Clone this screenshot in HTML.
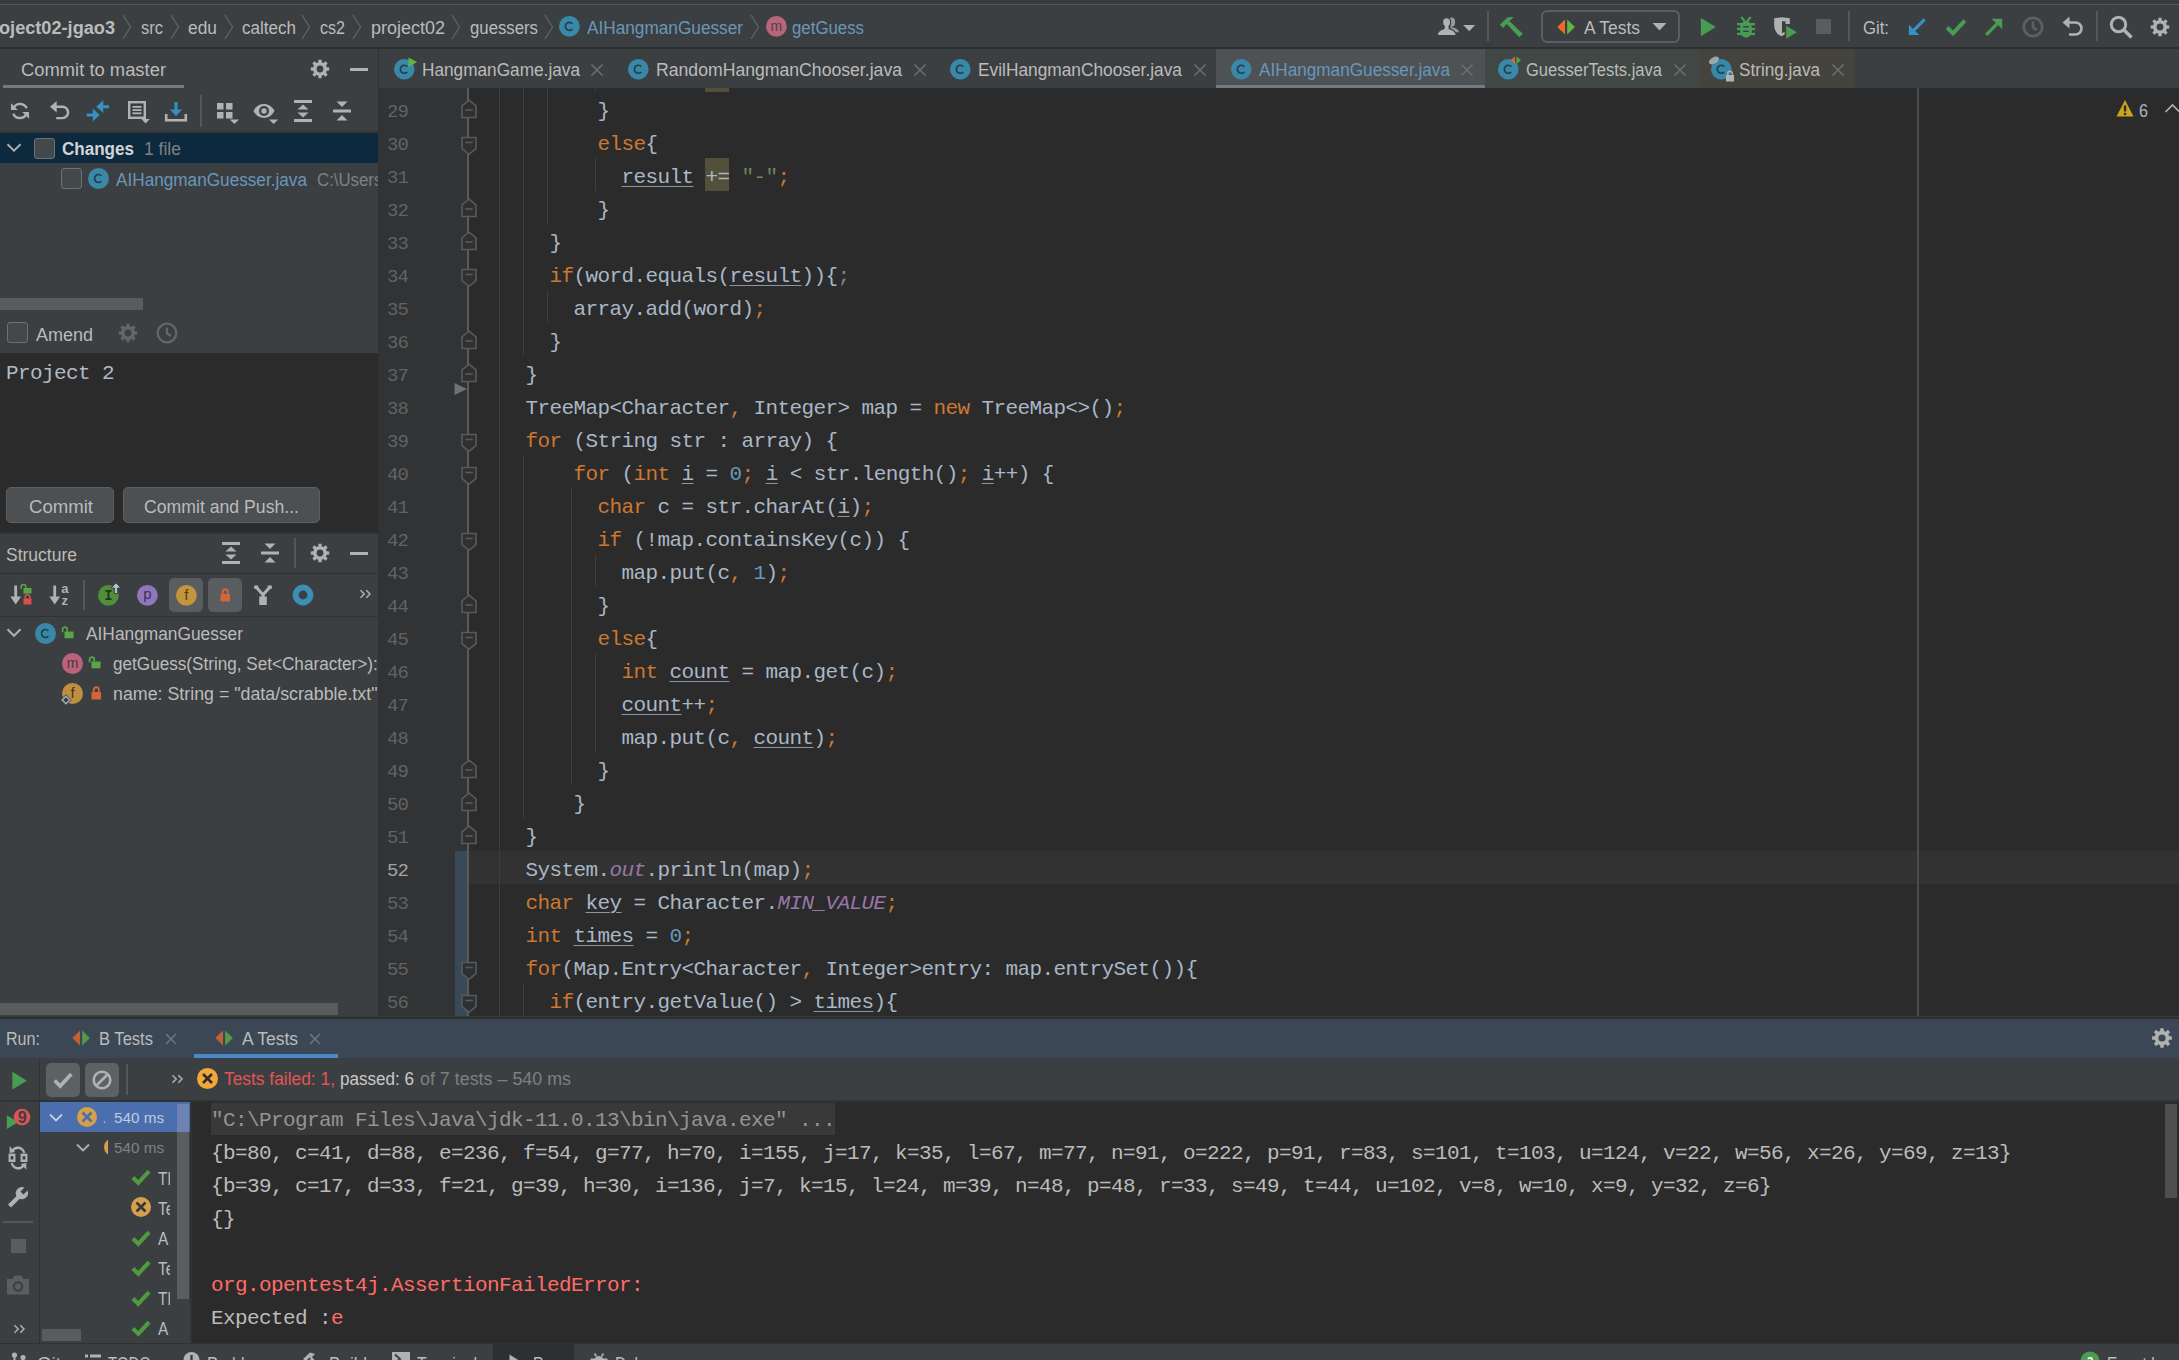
<!DOCTYPE html>
<html><head><meta charset="utf-8"><title>IDE</title><style>
html,body{margin:0;padding:0;background:#3c3f41;overflow:hidden;}
html{width:2179px;height:1360px;}
body{width:2179px;height:1360px;position:relative;overflow:hidden;font-family:"Liberation Sans",sans-serif;}
div,span.u,svg,pre{position:absolute;margin:0;padding:0;}
span.u{white-space:pre;transform-origin:0 50%;display:block;}
pre{font-family:"Liberation Mono",monospace;font-size:21px;letter-spacing:-0.602px;line-height:33px;color:#a9b7c6;white-space:pre;}
pre i{font-style:italic;color:#9876aa;}
pre b{font-weight:normal;color:#cc7832;}
pre s{text-decoration:none;color:#6a8759;}
pre em{font-style:normal;color:#6897bb;}
pre u{text-decoration:underline;text-decoration-thickness:1px;text-underline-offset:3px;text-decoration-color:#8a96a3;}
</style></head><body>
<div id="r" style="left:0;top:0;width:2179px;height:1360px;overflow:hidden">
<div style="left:0px;top:0px;width:2179px;height:48px;background:#3c3f41;"></div>
<div style="left:0px;top:0px;width:2179px;height:4px;background:#393b3d;"></div>
<div style="left:0px;top:4px;width:2179px;height:1px;background:#555555;"></div>
<div style="left:0px;top:47px;width:2179px;height:2px;background:#2d2f30;"></div>
<span class="u" style="left:-1px;top:15.94px;font-size:17.5px;line-height:24px;color:#bbbbbb;font-weight:bold;transform:scaleX(1.0371);">oject02-jgao3</span>
<svg style="left:122px;top:14px;" width="10" height="26" viewBox="0 0 10 26"><path d="M1 1 L8.5 13 L1 25" fill="none" stroke="#606365" stroke-width="1.3"/></svg>
<svg style="left:170px;top:14px;" width="10" height="26" viewBox="0 0 10 26"><path d="M1 1 L8.5 13 L1 25" fill="none" stroke="#606365" stroke-width="1.3"/></svg>
<svg style="left:224px;top:14px;" width="10" height="26" viewBox="0 0 10 26"><path d="M1 1 L8.5 13 L1 25" fill="none" stroke="#606365" stroke-width="1.3"/></svg>
<svg style="left:301px;top:14px;" width="10" height="26" viewBox="0 0 10 26"><path d="M1 1 L8.5 13 L1 25" fill="none" stroke="#606365" stroke-width="1.3"/></svg>
<svg style="left:352px;top:14px;" width="10" height="26" viewBox="0 0 10 26"><path d="M1 1 L8.5 13 L1 25" fill="none" stroke="#606365" stroke-width="1.3"/></svg>
<svg style="left:451px;top:14px;" width="10" height="26" viewBox="0 0 10 26"><path d="M1 1 L8.5 13 L1 25" fill="none" stroke="#606365" stroke-width="1.3"/></svg>
<svg style="left:544px;top:14px;" width="10" height="26" viewBox="0 0 10 26"><path d="M1 1 L8.5 13 L1 25" fill="none" stroke="#606365" stroke-width="1.3"/></svg>
<svg style="left:750px;top:14px;" width="10" height="26" viewBox="0 0 10 26"><path d="M1 1 L8.5 13 L1 25" fill="none" stroke="#606365" stroke-width="1.3"/></svg>
<span class="u" style="left:141px;top:15.94px;font-size:17.5px;line-height:24px;color:#bbbbbb;transform:scaleX(0.9431);">src</span>
<span class="u" style="left:188px;top:15.94px;font-size:17.5px;line-height:24px;color:#bbbbbb;transform:scaleX(0.9932);">edu</span>
<span class="u" style="left:242px;top:15.94px;font-size:17.5px;line-height:24px;color:#bbbbbb;transform:scaleX(0.9739);">caltech</span>
<span class="u" style="left:320px;top:15.94px;font-size:17.5px;line-height:24px;color:#bbbbbb;transform:scaleX(0.9180);">cs2</span>
<span class="u" style="left:371px;top:15.94px;font-size:17.5px;line-height:24px;color:#bbbbbb;transform:scaleX(1.0279);">project02</span>
<span class="u" style="left:470px;top:15.94px;font-size:17.5px;line-height:24px;color:#bbbbbb;transform:scaleX(0.9576);">guessers</span>
<svg style="left:558.3000000000001px;top:15.4px;" width="22.8" height="22.8" viewBox="0 0 22.8 22.8"><circle cx="11.4" cy="11.4" r="10.4" fill="#3a88a8"/><path d="M14.4 8.7 A4.0 4.0 0 1 0 14.4 14.100000000000001" fill="none" stroke="#213d4b" stroke-width="1.65"/></svg>
<span class="u" style="left:587px;top:15.94px;font-size:17.5px;line-height:24px;color:#6897bb;transform:scaleX(0.9839);">AIHangmanGuesser</span>
<svg style="left:764.9px;top:15.399999999999999px;" width="22.8" height="22.8" viewBox="0 0 22.8 22.8"><circle cx="11.4" cy="11.4" r="10.4" fill="#b4667b"/><text x="11.4" y="15.52" text-anchor="middle" font-family="Liberation Sans" font-size="14" font-weight="normal" fill="#2b2b2b" fill-opacity="0.7">m</text></svg>
<span class="u" style="left:792px;top:15.94px;font-size:17.5px;line-height:24px;color:#6897bb;transform:scaleX(0.9612);">getGuess</span>
<svg style="left:1436px;top:15px;" width="40" height="24" viewBox="0 0 40 24"><g fill="#afb1b3"><ellipse cx="15.8" cy="7.2" rx="3.3" ry="4.6" opacity="0.8"/><path d="M14 12 C19 12.6 22.8 14.2 22.9 17.3 L17 17.3 Z" opacity="0.8"/></g><g fill="#afb1b3" stroke="#3c3f41" stroke-width="1.1"><path d="M1.2 20.6 C1.2 16 4.5 14.6 8 13.6 L8.3 11.5 C5.8 9.5 5.6 2.6 10.6 2.6 C15.6 2.6 15.4 9.5 12.9 11.5 L13.2 13.6 C16.8 14.6 20.2 16 20.2 20.6 Z"/></g><path d="M27.2 10 L39.2 10 L33.2 16.2 Z" fill="#afb1b3"/></svg>
<div style="left:1487px;top:11px;width:2px;height:30px;background:#555759;"></div>
<svg style="left:1498px;top:14px;" width="28" height="26" viewBox="0 0 28 26"><g fill="#499c54"><path d="M1.9 10.4 L9.8 3.2 L15.7 2.9 L10.7 7.8 L5 13.9 Z"/><path d="M8.3 9.6 L11.4 7.1 L24.8 19.8 L21.2 23.2 Z"/></g></svg>
<div style="left:1541px;top:10px;width:139px;height:33px;background:transparent;box-sizing:border-box;border:2px solid #5c5f61;border-radius:6px;"></div>
<svg style="left:1557px;top:18px;" width="19" height="18" viewBox="0 0 19 18"><g opacity="1"><path d="M8 1.6 L8 16.4 L0.3 9 Z" fill="#f0692a"/><path d="M10.2 1.6 L10.2 16.4 L17.9 9 Z" fill="#5fb643"/></g></svg>
<span class="u" style="left:1584px;top:15.94px;font-size:17.5px;line-height:24px;color:#bbbbbb;transform:scaleX(0.9982);">A Tests</span>
<svg style="left:1652px;top:22px;" width="16" height="10" viewBox="0 0 16 10"><path d="M0.5 1 L14.5 1 L7.5 8.5 Z" fill="#afb1b3"/></svg>
<svg style="left:1700px;top:17px;" width="18" height="20" viewBox="0 0 18 20"><path d="M0.9 1 L15.8 10 L0.9 19.2 Z" fill="#499c54"/></svg>
<svg style="left:1734px;top:14px;" width="24" height="26" viewBox="0 0 24 26"><g fill="#499c54"><ellipse cx="12" cy="15.2" rx="6.1" ry="8.5"/><rect x="3" y="9" width="18" height="2.3"/><rect x="3" y="13.8" width="18" height="2.3"/><rect x="3" y="18.8" width="18" height="2.3"/></g><path d="M7.3 3 L10.6 7 M16.7 3 L13.4 7" stroke="#499c54" stroke-width="2.1" fill="none"/><rect x="9.2" y="12.1" width="5.6" height="1.4" fill="#3c3f41"/><rect x="9.2" y="16.6" width="5.6" height="1.4" fill="#3c3f41"/></svg>
<svg style="left:1772px;top:14px;" width="28" height="26" viewBox="0 0 28 26"><path d="M2.2 4.3 L9.9 3.2 L17.8 4.3 L17.8 10 L13.5 10 L13.5 7.2 L10 7.2 L10 19.3 L12.6 17.8 L12.6 20.6 L9.6 22.3 C5 20.4 2.2 16.4 2.2 11 Z" fill="#afb1b3"/><path d="M14.2 11.8 L14.2 24.8 L24.9 18.3 Z" fill="#499c54"/></svg>
<div style="left:1816px;top:19px;width:15px;height:15px;background:#5a5c5e;"></div>
<div style="left:1848px;top:11px;width:2px;height:30px;background:#555759;"></div>
<span class="u" style="left:1863px;top:15.94px;font-size:17.5px;line-height:24px;color:#bbbbbb;transform:scaleX(0.9551);">Git:</span>
<svg style="left:1906px;top:15.5px;" width="22" height="22" viewBox="0 0 22 22"><g transform="translate(11 11) scale(0.9) translate(-11 -11)"><g fill="none" stroke="#3592c4" stroke-width="3.5"><path d="M19.5 2.5 L4.5 17.5"/></g><path d="M2 20 L2 8.5 L13.5 20 Z" fill="#3592c4"/></g></svg>
<svg style="left:1944px;top:14.5px;" width="24" height="24" viewBox="0 0 24 24"><path d="M3 12.5 L9 18.5 L21 5.5" transform="translate(12 12) scale(0.98) translate(-12 -12)" fill="none" stroke="#499c54" stroke-width="4"/></svg>
<svg style="left:1983px;top:16.3px;" width="22" height="22" viewBox="0 0 22 22"><g transform="translate(11 11) scale(0.92) translate(-11 -11)"><g fill="none" stroke="#499c54" stroke-width="3.5"><path d="M2.5 19.5 L17 5"/></g><path d="M20 2 L8.5 2 L20 13.5 Z" fill="#499c54"/></g></svg>
<svg style="left:2021.3px;top:15.2px;" width="24" height="24" viewBox="0 0 24 24"><g opacity="1" fill="none" stroke="#5c5e60" stroke-width="2.8"><circle cx="12" cy="12" r="9.2"/><path d="M12 6.5 V12.5 L16 15"/></g></svg>
<svg style="left:2061px;top:15px;" width="24" height="24" viewBox="0 0 24 24"><g transform="translate(12 12) scale(1.0) translate(-12 -12)"><path d="M7 7.5 H14.5 A6 6 0 0 1 14.5 19.5 H8" fill="none" stroke="#afb1b3" stroke-width="2.6"/><path d="M1.5 7.5 L8.5 1.5 L8.5 13.5 Z" fill="#afb1b3"/></g></svg>
<div style="left:2096px;top:11px;width:2px;height:30px;background:#555759;"></div>
<svg style="left:2108px;top:14px;" width="26" height="26" viewBox="0 0 26 26"><circle cx="10.5" cy="10.5" r="7.2" fill="none" stroke="#afb1b3" stroke-width="3"/><path d="M15.5 15.5 L23.5 23.5" stroke="#afb1b3" stroke-width="3.6"/></svg>
<svg style="left:2148px;top:15px;" width="24" height="24" viewBox="0 0 24 24"><path d="M10.31 5.18 L10.40 2.64 L13.60 2.64 L13.69 5.18 L15.63 5.98 L17.49 4.25 L19.75 6.51 L18.02 8.37 L18.82 10.31 L21.36 10.40 L21.36 13.60 L18.82 13.69 L18.02 15.63 L19.75 17.49 L17.49 19.75 L15.63 18.02 L13.69 18.82 L13.60 21.36 L10.40 21.36 L10.31 18.82 L8.37 18.02 L6.51 19.75 L4.25 17.49 L5.98 15.63 L5.18 13.69 L2.64 13.60 L2.64 10.40 L5.18 10.31 L5.98 8.37 L4.25 6.51 L6.51 4.25 L8.37 5.98Z M8.58 12.00 a3.42 3.42 0 1 0 6.84 0 a3.42 3.42 0 1 0 -6.84 0Z" fill="#afb1b3" fill-rule="evenodd" opacity="1"/></svg>
<div style="left:379px;top:49px;width:1800px;height:39px;background:#3c3f41;"></div>
<div style="left:378px;top:49px;width:1px;height:39px;background:#323232;"></div>
<svg style="left:392.7px;top:58.0px;" width="22.6" height="22.6" viewBox="0 0 22.6 22.6"><circle cx="11.3" cy="11.3" r="10.3" fill="#3a88a8"/><path d="M14.3 8.600000000000001 A4.0 4.0 0 1 0 14.3 14.0" fill="none" stroke="#213d4b" stroke-width="1.65"/></svg>
<svg style="left:408px;top:57px;" width="10" height="11" viewBox="0 0 10 11"><path d="M0.5 0.5 L9 5 L0.5 10 Z" fill="#62b543"/></svg>
<span class="u" style="left:422px;top:58.04px;font-size:17.5px;line-height:24px;color:#bbbbbb;transform:scaleX(0.9844);">HangmanGame.java</span>
<svg style="left:589px;top:62px;" width="16" height="16" viewBox="0 0 16 16"><path d="M2.5 2.5 L13.5 13.5 M13.5 2.5 L2.5 13.5" stroke="#6c6f71" stroke-width="1.5" fill="none"/></svg>
<svg style="left:626.7px;top:58.0px;" width="22.6" height="22.6" viewBox="0 0 22.6 22.6"><circle cx="11.3" cy="11.3" r="10.3" fill="#3a88a8"/><path d="M14.3 8.600000000000001 A4.0 4.0 0 1 0 14.3 14.0" fill="none" stroke="#213d4b" stroke-width="1.65"/></svg>
<span class="u" style="left:656px;top:58.04px;font-size:17.5px;line-height:24px;color:#bbbbbb;transform:scaleX(1.0075);">RandomHangmanChooser.java</span>
<svg style="left:912px;top:62px;" width="16" height="16" viewBox="0 0 16 16"><path d="M2.5 2.5 L13.5 13.5 M13.5 2.5 L2.5 13.5" stroke="#6c6f71" stroke-width="1.5" fill="none"/></svg>
<svg style="left:948.7px;top:58.0px;" width="22.6" height="22.6" viewBox="0 0 22.6 22.6"><circle cx="11.3" cy="11.3" r="10.3" fill="#3a88a8"/><path d="M14.3 8.600000000000001 A4.0 4.0 0 1 0 14.3 14.0" fill="none" stroke="#213d4b" stroke-width="1.65"/></svg>
<span class="u" style="left:978px;top:58.04px;font-size:17.5px;line-height:24px;color:#bbbbbb;transform:scaleX(0.9892);">EvilHangmanChooser.java</span>
<svg style="left:1192px;top:62px;" width="16" height="16" viewBox="0 0 16 16"><path d="M2.5 2.5 L13.5 13.5 M13.5 2.5 L2.5 13.5" stroke="#6c6f71" stroke-width="1.5" fill="none"/></svg>
<div style="left:1216px;top:49px;width:269px;height:39px;background:#4e5254;"></div>
<div style="left:1216px;top:84.5px;width:269px;height:3.5px;background:#747a80;"></div>
<svg style="left:1229.7px;top:58.0px;" width="22.6" height="22.6" viewBox="0 0 22.6 22.6"><circle cx="11.3" cy="11.3" r="10.3" fill="#3a88a8"/><path d="M14.3 8.600000000000001 A4.0 4.0 0 1 0 14.3 14.0" fill="none" stroke="#213d4b" stroke-width="1.65"/></svg>
<span class="u" style="left:1259px;top:58.04px;font-size:17.5px;line-height:24px;color:#6897bb;transform:scaleX(0.9817);">AIHangmanGuesser.java</span>
<svg style="left:1459px;top:62px;" width="16" height="16" viewBox="0 0 16 16"><path d="M2.5 2.5 L13.5 13.5 M13.5 2.5 L2.5 13.5" stroke="#6c6f71" stroke-width="1.5" fill="none"/></svg>
<div style="left:1485px;top:49px;width:213px;height:39px;background:#3f4844;"></div>
<svg style="left:1496.7px;top:58.0px;" width="22.6" height="22.6" viewBox="0 0 22.6 22.6"><circle cx="11.3" cy="11.3" r="10.3" fill="#3a88a8"/><path d="M14.3 8.600000000000001 A4.0 4.0 0 1 0 14.3 14.0" fill="none" stroke="#213d4b" stroke-width="1.65"/></svg>
<svg style="left:1510px;top:56px;" width="12" height="9" viewBox="0 0 12 9"><path d="M5 0.5 L5 8 L0.5 4.2 Z" fill="#e8632a"/><path d="M6.5 0.5 L6.5 8 L11 4.2 Z" fill="#57a64a"/></svg>
<span class="u" style="left:1526px;top:58.04px;font-size:17.5px;line-height:24px;color:#bbbbbb;transform:scaleX(0.9448);">GuesserTests.java</span>
<svg style="left:1672px;top:62px;" width="16" height="16" viewBox="0 0 16 16"><path d="M2.5 2.5 L13.5 13.5 M13.5 2.5 L2.5 13.5" stroke="#6c6f71" stroke-width="1.5" fill="none"/></svg>
<div style="left:1698px;top:49px;width:157px;height:39px;background:#45433d;"></div>
<svg style="left:1709.7px;top:58.0px;" width="22.6" height="22.6" viewBox="0 0 22.6 22.6"><circle cx="11.3" cy="11.3" r="10.3" fill="#3a88a8"/><path d="M14.3 8.600000000000001 A4.0 4.0 0 1 0 14.3 14.0" fill="none" stroke="#213d4b" stroke-width="1.65"/></svg>
<svg style="left:1708px;top:56px;" width="12" height="9" viewBox="0 0 12 9"><ellipse cx="6" cy="4.5" rx="5.5" ry="3.2" fill="#9aa7b0" transform="rotate(-30 6 4.5)"/></svg>
<svg style="left:1725px;top:70px;" width="10" height="12" viewBox="0 0 10 12"><rect x="1" y="5" width="8" height="6.5" fill="#aeb5ba"/><path d="M2.8 5 V3.5 A2.2 2.2 0 0 1 7.2 3.5 V5" fill="none" stroke="#aeb5ba" stroke-width="1.4"/></svg>
<span class="u" style="left:1739px;top:58.04px;font-size:17.5px;line-height:24px;color:#bbbbbb;transform:scaleX(0.9796);">String.java</span>
<svg style="left:1830px;top:62px;" width="16" height="16" viewBox="0 0 16 16"><path d="M2.5 2.5 L13.5 13.5 M13.5 2.5 L2.5 13.5" stroke="#6c6f71" stroke-width="1.5" fill="none"/></svg>
<div style="left:0px;top:49px;width:378px;height:968px;background:#3c3f41;"></div>
<span class="u" style="left:21px;top:57.64px;font-size:17.5px;line-height:24px;color:#bbbbbb;transform:scaleX(1.0501);">Commit to master</span>
<div style="left:3px;top:84.8px;width:181px;height:3.5px;background:#747a80;"></div>
<svg style="left:308px;top:57px;" width="24" height="24" viewBox="0 0 24 24"><path d="M10.32 5.25 L10.42 2.73 L13.58 2.73 L13.68 5.25 L15.59 6.04 L17.44 4.33 L19.67 6.56 L17.96 8.41 L18.75 10.32 L21.27 10.42 L21.27 13.58 L18.75 13.68 L17.96 15.59 L19.67 17.44 L17.44 19.67 L15.59 17.96 L13.68 18.75 L13.58 21.27 L10.42 21.27 L10.32 18.75 L8.41 17.96 L6.56 19.67 L4.33 17.44 L6.04 15.59 L5.25 13.68 L2.73 13.58 L2.73 10.42 L5.25 10.32 L6.04 8.41 L4.33 6.56 L6.56 4.33 L8.41 6.04Z M8.62 12.00 a3.384 3.384 0 1 0 6.768 0 a3.384 3.384 0 1 0 -6.768 0Z" fill="#afb1b3" fill-rule="evenodd" opacity="1"/></svg>
<div style="left:350.0px;top:67.5px;width:18px;height:3px;background:#afb1b3;"></div>
<svg style="left:8px;top:99px;" width="24" height="24" viewBox="0 0 24 24"><g transform="translate(12 12) scale(0.9) translate(-12 -12)"><g fill="none" stroke="#afb1b3" stroke-width="2.7"><path d="M19.5 9 A8 8 0 0 0 5 8.5"/><path d="M4.5 15 A8 8 0 0 0 19 15.5"/></g><path d="M2 3.5 L2 11 L9.5 11 Z" fill="#afb1b3"/><path d="M22 20.5 L22 13 L14.5 13 Z" fill="#afb1b3"/></g></svg>
<svg style="left:48px;top:99px;" width="24" height="24" viewBox="0 0 24 24"><g transform="translate(12 12) scale(0.95) translate(-12 -12)"><path d="M7 7.5 H14.5 A6 6 0 0 1 14.5 19.5 H8" fill="none" stroke="#afb1b3" stroke-width="2.6"/><path d="M1.5 7.5 L8.5 1.5 L8.5 13.5 Z" fill="#afb1b3"/></g></svg>
<svg style="left:86px;top:99px;" width="24" height="24" viewBox="0 0 24 24"><g fill="#3592c4"><path d="M10.3 7.7 L17.2 1.3 L17.2 6.2 L23 6.2 L23 9.2 L17.2 9.2 L17.2 14.1 Z"/><path d="M13.7 16 L6.8 9.6 L6.8 14.5 L0.7 14.5 L0.7 17.5 L6.8 17.5 L6.8 22.4 Z"/></g></svg>
<svg style="left:127px;top:100px;" width="24" height="24" viewBox="0 0 24 24"><rect x="2.2" y="2.2" width="15.6" height="15.6" fill="none" stroke="#afb1b3" stroke-width="2.4"/><g fill="#afb1b3"><rect x="5.5" y="6" width="9" height="1.8"/><rect x="5.5" y="9.2" width="9" height="1.8"/><rect x="5.5" y="12.4" width="9" height="1.8"/><path d="M14.5 19 L22.8 19 L18.6 23.5 Z"/></g></svg>
<svg style="left:164px;top:99px;" width="24" height="24" viewBox="0 0 24 24"><path d="M2.2 15 V21.3 H21.8 V15" fill="none" stroke="#afb1b3" stroke-width="2.6"/><path d="M10.5 3 H13.5 V10.5 H18 L12 17 L6 10.5 H10.5 Z" fill="#3592c4"/></svg>
<div style="left:200px;top:95px;width:2px;height:32px;background:#555759;"></div>
<svg style="left:216px;top:102px;" width="24" height="23" viewBox="0 0 24 23"><g fill="#afb1b3"><rect x="1" y="1" width="6.5" height="6.5"/><rect x="10" y="1" width="6.5" height="6.5"/><rect x="1" y="10" width="6.5" height="6.5"/><rect x="10" y="10" width="6.5" height="6.5"/><path d="M13.8 17.5 L23 17.5 L18.4 22 Z"/></g></svg>
<svg style="left:252px;top:101px;" width="28" height="24" viewBox="0 0 28 24"><path d="M1.5 10 C5.5 0.8 18 0.8 22.5 10 C18 19.2 5.5 19.2 1.5 10 Z" fill="#afb1b3"/><circle cx="12" cy="10" r="5" fill="#3c3f41"/><circle cx="12" cy="10" r="2.7" fill="#afb1b3"/><path d="M17 18.5 L26.2 18.5 L21.6 23 Z" fill="#afb1b3"/></svg>
<svg style="left:293px;top:99px;" width="20" height="24" viewBox="0 0 20 24"><g fill="#afb1b3"><rect x="1" y="1" width="18" height="3"/><rect x="1" y="20" width="18" height="3"/><path d="M4.5 10.5 L10 5.5 L15.5 10.5 Z"/><path d="M4.5 13.5 L10 18.5 L15.5 13.5 Z"/></g></svg>
<svg style="left:332px;top:99px;" width="20" height="24" viewBox="0 0 20 24"><g fill="#afb1b3"><rect x="1" y="10.5" width="18" height="3"/><path d="M4.5 2.5 L10 8 L15.5 2.5 Z"/><path d="M4.5 21.5 L10 16 L15.5 21.5 Z"/></g></svg>
<div style="left:0px;top:130.5px;width:378px;height:2.5px;background:#343638;"></div>
<div style="left:0px;top:133px;width:378px;height:30px;background:#0d293e;"></div>
<svg style="left:4.300000000000001px;top:136.5px;" width="20" height="20" viewBox="0 0 20 20"><path d="M3.5 7.25 L10 13.75 L16.5 7.25" fill="none" stroke="#afb1b3" stroke-width="1.8"/></svg>
<div style="left:34.4px;top:138px;width:21px;height:21px;background:#43494a;box-sizing:border-box;border:1.5px solid #6e7173;border-radius:3px;"></div>
<span class="u" style="left:62px;top:137.14px;font-size:17.5px;line-height:24px;color:#d2d4d6;font-weight:bold;transform:scaleX(0.9742);">Changes</span>
<span class="u" style="left:144px;top:136.94px;font-size:17.5px;line-height:24px;color:#7d8082;transform:scaleX(1.0009);">1 file</span>
<div style="left:61.4px;top:168px;width:21px;height:21px;background:#43494a;box-sizing:border-box;border:1.5px solid #6e7173;border-radius:3px;"></div>
<svg style="left:87.4px;top:166.5px;" width="23.0" height="23.0" viewBox="0 0 23.0 23.0"><circle cx="11.5" cy="11.5" r="10.5" fill="#3a88a8"/><path d="M14.5 8.8 A4.0 4.0 0 1 0 14.5 14.2" fill="none" stroke="#213d4b" stroke-width="1.65"/></svg>
<span class="u" style="left:116px;top:168.24px;font-size:17.5px;line-height:24px;color:#6897bb;transform:scaleX(0.9817);">AIHangmanGuesser.java</span>
<div style="left:0;top:0;width:378px;height:1360px;overflow:hidden"><span class="u" style="left:317px;top:168.24px;font-size:17.5px;line-height:24px;color:#7d8082;transform:scaleX(0.9599);">C:\Users\</span></div>
<div style="left:0px;top:298px;width:143px;height:12px;background:#595b5d;"></div>
<div style="left:6.7px;top:322px;width:21px;height:21px;background:#43494a;box-sizing:border-box;border:1.5px solid #6e7173;border-radius:3px;"></div>
<span class="u" style="left:36px;top:322.54px;font-size:17.5px;line-height:24px;color:#bbbbbb;transform:scaleX(1.0279);">Amend</span>
<svg style="left:116px;top:321px;" width="24" height="24" viewBox="0 0 24 24"><path d="M10.31 5.18 L10.40 2.64 L13.60 2.64 L13.69 5.18 L15.63 5.98 L17.49 4.25 L19.75 6.51 L18.02 8.37 L18.82 10.31 L21.36 10.40 L21.36 13.60 L18.82 13.69 L18.02 15.63 L19.75 17.49 L17.49 19.75 L15.63 18.02 L13.69 18.82 L13.60 21.36 L10.40 21.36 L10.31 18.82 L8.37 18.02 L6.51 19.75 L4.25 17.49 L5.98 15.63 L5.18 13.69 L2.64 13.60 L2.64 10.40 L5.18 10.31 L5.98 8.37 L4.25 6.51 L6.51 4.25 L8.37 5.98Z M8.58 12.00 a3.42 3.42 0 1 0 6.84 0 a3.42 3.42 0 1 0 -6.84 0Z" fill="#62656a" fill-rule="evenodd" opacity="1"/></svg>
<svg style="left:155px;top:321px;" width="24" height="24" viewBox="0 0 24 24"><g opacity="1" fill="none" stroke="#62656a" stroke-width="2.3"><circle cx="12" cy="12" r="9.3"/><path d="M12 6.5 V12.5 L16 15"/></g></svg>
<div style="left:0px;top:353px;width:378px;height:179px;background:#2b2b2b;"></div>
<pre style="left:6px;top:357.3px;color:#b0bac5;">Project 2</pre>
<div style="left:6px;top:487px;width:108px;height:36px;background:#4c5052;box-sizing:border-box;border:1.5px solid #5e6060;border-radius:5px;"></div>
<span class="u" style="left:29px;top:495.14px;font-size:17.5px;line-height:24px;color:#bbbbbb;transform:scaleX(1.0617);">Commit</span>
<div style="left:123px;top:487px;width:197px;height:36px;background:#4c5052;box-sizing:border-box;border:1.5px solid #5e6060;border-radius:5px;"></div>
<span class="u" style="left:144px;top:495.14px;font-size:17.5px;line-height:24px;color:#bbbbbb;transform:scaleX(1.0086);">Commit and Push...</span>
<div style="left:0px;top:532px;width:378px;height:2px;background:#323232;"></div>
<span class="u" style="left:6px;top:543.24px;font-size:17.5px;line-height:24px;color:#bbbbbb;transform:scaleX(1.0000);">Structure</span>
<svg style="left:221px;top:541px;" width="20" height="24" viewBox="0 0 20 24"><g fill="#afb1b3"><rect x="1" y="1" width="18" height="3"/><rect x="1" y="20" width="18" height="3"/><path d="M4.5 10.5 L10 5.5 L15.5 10.5 Z"/><path d="M4.5 13.5 L10 18.5 L15.5 13.5 Z"/></g></svg>
<svg style="left:260px;top:541px;" width="20" height="24" viewBox="0 0 20 24"><g fill="#afb1b3"><rect x="1" y="10.5" width="18" height="3"/><path d="M4.5 2.5 L10 8 L15.5 2.5 Z"/><path d="M4.5 21.5 L10 16 L15.5 21.5 Z"/></g></svg>
<div style="left:294px;top:538px;width:2px;height:30px;background:#555759;"></div>
<svg style="left:308px;top:541px;" width="24" height="24" viewBox="0 0 24 24"><path d="M10.32 5.25 L10.42 2.73 L13.58 2.73 L13.68 5.25 L15.59 6.04 L17.44 4.33 L19.67 6.56 L17.96 8.41 L18.75 10.32 L21.27 10.42 L21.27 13.58 L18.75 13.68 L17.96 15.59 L19.67 17.44 L17.44 19.67 L15.59 17.96 L13.68 18.75 L13.58 21.27 L10.42 21.27 L10.32 18.75 L8.41 17.96 L6.56 19.67 L4.33 17.44 L6.04 15.59 L5.25 13.68 L2.73 13.58 L2.73 10.42 L5.25 10.32 L6.04 8.41 L4.33 6.56 L6.56 4.33 L8.41 6.04Z M8.62 12.00 a3.384 3.384 0 1 0 6.768 0 a3.384 3.384 0 1 0 -6.768 0Z" fill="#afb1b3" fill-rule="evenodd" opacity="1"/></svg>
<div style="left:350.0px;top:551.5px;width:18px;height:3px;background:#afb1b3;"></div>
<div style="left:0px;top:573px;width:378px;height:1px;background:#323232;"></div>
<svg style="left:9.5px;top:583px;" width="26" height="24" viewBox="0 0 26 24"><path d="M5.7 2.5 V17" stroke="#afb1b3" stroke-width="2.8" fill="none"/><path d="M0.3 13.5 L11.1 13.5 L5.7 21.5 Z" fill="#afb1b3"/><rect x="13.5" y="5" width="8" height="5.5" fill="#57a64a"/><path d="M11.2 6 V3.8 A2.3 2.3 0 0 1 15.8 3.8 V5" fill="none" stroke="#57a64a" stroke-width="1.5"/><rect x="13.5" y="15.5" width="8" height="6" fill="#db4f4f"/><path d="M15.2 15.5 V13.8 A2.3 2.3 0 0 1 19.8 13.8 V15.5" fill="none" stroke="#db4f4f" stroke-width="1.5"/></svg>
<svg style="left:48.5px;top:583px;" width="26" height="24" viewBox="0 0 26 24"><path d="M5.7 2.5 V17" stroke="#afb1b3" stroke-width="2.8" fill="none"/><path d="M0.3 13.5 L11.1 13.5 L5.7 21.5 Z" fill="#afb1b3"/><text x="12.3" y="10" font-family="Liberation Sans" font-size="13" font-weight="bold" fill="#afb1b3">a</text><text x="12.6" y="21.5" font-family="Liberation Sans" font-size="13" font-weight="bold" fill="#afb1b3">z</text></svg>
<div style="left:83px;top:580px;width:2px;height:30px;background:#555759;"></div>
<svg style="left:96.6px;top:583.9px;" width="22.8" height="22.8" viewBox="0 0 22.8 22.8"><circle cx="11.4" cy="11.4" r="10.4" fill="#4f8f3c"/><text x="11.4" y="16.02" text-anchor="middle" font-family="Liberation Mono" font-size="14" font-weight="bold" fill="#1d3517" fill-opacity="0.95">I</text></svg>
<svg style="left:109.5px;top:582px;" width="12" height="13" viewBox="0 0 12 13"><path d="M6 0.8 L11 6 L7.7 6 L7.7 11.5 L4.3 11.5 L4.3 6 L1 6 Z" fill="#b5c2cc" stroke="#3c3f41" stroke-width="1"/></svg>
<svg style="left:135.6px;top:583.6px;" width="22.8" height="22.8" viewBox="0 0 22.8 22.8"><circle cx="11.4" cy="11.4" r="10.4" fill="#9077bc"/><text x="11.4" y="14.850000000000001" text-anchor="middle" font-family="Liberation Sans" font-size="15" font-weight="normal" fill="#2f2444" fill-opacity="0.9">p</text></svg>
<div style="left:169px;top:578px;width:34px;height:34px;background:#5a5d5f;border-radius:5px;"></div>
<svg style="left:174.6px;top:583.6px;" width="22.8" height="22.8" viewBox="0 0 22.8 22.8"><circle cx="11.4" cy="11.4" r="10.4" fill="#c4943f"/><text x="11.4" y="16.35" text-anchor="middle" font-family="Liberation Sans" font-size="15" font-weight="normal" fill="#3f2d12" fill-opacity="0.9">f</text></svg>
<div style="left:208px;top:578px;width:34px;height:34px;background:#5a5d5f;border-radius:5px;"></div>
<svg style="left:218px;top:586.5px;" width="14" height="16" viewBox="0 0 14 16"><rect x="2.5" y="7" width="9.5" height="7.5" fill="#d0673a"/><path d="M4.7 7.5 V4.8 A2.55 2.55 0 0 1 9.8 4.8 V7.5" fill="none" stroke="#d0673a" stroke-width="1.8"/></svg>
<svg style="left:252px;top:584px;" width="22" height="22" viewBox="0 0 22 22"><g fill="#afb1b3"><rect x="7.2" y="12.5" width="7.6" height="8.5"/><rect x="2.2" y="1.5" width="4" height="3.4"/><rect x="15.8" y="1.5" width="4" height="3.4"/></g><path d="M3.6 2.6 L11 10.8 L18.4 2.6 M11 10.8 V14" fill="none" stroke="#afb1b3" stroke-width="3"/></svg>
<svg style="left:291px;top:583px;" width="24" height="24" viewBox="0 0 24 24"><circle cx="12" cy="12" r="7.4" fill="none" stroke="#3b8fb5" stroke-width="6"/></svg>
<svg style="left:358px;top:588.3px;" width="16" height="12" viewBox="0 0 16 12"><path d="M2.5 2.3 L6.2 6 L2.5 9.7 M8.3 2.3 L12 6 L8.3 9.7" fill="none" stroke="#afb1b3" stroke-width="1.5"/></svg>
<div style="left:0px;top:616px;width:378px;height:1px;background:#323232;"></div>
<svg style="left:4px;top:622px;" width="20" height="20" viewBox="0 0 20 20"><path d="M3.5 7.25 L10 13.75 L16.5 7.25" fill="none" stroke="#afb1b3" stroke-width="2"/></svg>
<svg style="left:33.5px;top:621.5px;" width="23.0" height="23.0" viewBox="0 0 23.0 23.0"><circle cx="11.5" cy="11.5" r="10.5" fill="#3a88a8"/><path d="M14.5 8.8 A4.0 4.0 0 1 0 14.5 14.2" fill="none" stroke="#213d4b" stroke-width="1.65"/></svg>
<svg style="left:60.7px;top:625.3px;" width="14" height="14" viewBox="0 0 14 14"><rect x="3.5" y="6.5" width="9" height="6.8" fill="#57a64a"/><path d="M1.6 7.2 V4.4 A2.3 2.3 0 0 1 6.2 4.4 V6.5" fill="none" stroke="#57a64a" stroke-width="1.7"/></svg>
<span class="u" style="left:86px;top:621.94px;font-size:17.5px;line-height:24px;color:#bbbbbb;transform:scaleX(0.9902);">AIHangmanGuesser</span>
<svg style="left:60.5px;top:651.5px;" width="23.0" height="23.0" viewBox="0 0 23.0 23.0"><circle cx="11.5" cy="11.5" r="10.5" fill="#b9627a"/><text x="11.5" y="15.620000000000001" text-anchor="middle" font-family="Liberation Sans" font-size="14" font-weight="normal" fill="#2b2b2b" fill-opacity="0.8">m</text></svg>
<svg style="left:87.7px;top:655.3px;" width="14" height="14" viewBox="0 0 14 14"><rect x="3.5" y="6.5" width="9" height="6.8" fill="#57a64a"/><path d="M1.6 7.2 V4.4 A2.3 2.3 0 0 1 6.2 4.4 V6.5" fill="none" stroke="#57a64a" stroke-width="1.7"/></svg>
<div style="left:0;top:0;width:378px;height:1360px;overflow:hidden"><span class="u" style="left:113px;top:651.94px;font-size:17.5px;line-height:24px;color:#bbbbbb;transform:scaleX(0.9788);">getGuess(String, Set&lt;Character&gt;): c</span></div>
<svg style="left:60.5px;top:681.5px;" width="23.0" height="23.0" viewBox="0 0 23.0 23.0"><circle cx="11.5" cy="11.5" r="10.5" fill="#bd8f3f"/><text x="11.5" y="16.45" text-anchor="middle" font-family="Liberation Sans" font-size="15" font-weight="normal" fill="#3d2b10" fill-opacity="0.9">f</text></svg>
<svg style="left:59.5px;top:693.5px;" width="12" height="12" viewBox="0 0 12 12"><path d="M6 0.3 L11.7 6 L6 11.7 L0.3 6 Z" fill="#3c3f41"/><path d="M6 2.2 L9.8 6 L6 9.8 L2.2 6 Z" fill="#3c3f41" stroke="#9fb0bd" stroke-width="1.5"/></svg>
<svg style="left:88.5px;top:684.7px;" width="14" height="16" viewBox="0 0 14 16"><rect x="2.5" y="7" width="9.5" height="7.5" fill="#d0673a"/><path d="M4.7 7.5 V4.8 A2.55 2.55 0 0 1 9.8 4.8 V7.5" fill="none" stroke="#d0673a" stroke-width="1.8"/></svg>
<div style="left:0;top:0;width:378px;height:1360px;overflow:hidden"><span class="u" style="left:113px;top:681.94px;font-size:17.5px;line-height:24px;color:#bbbbbb;transform:scaleX(1.0173);">name: String = "data/scrabble.txt"</span></div>
<div style="left:0px;top:1003px;width:338px;height:12px;background:#595b5d;"></div>
<div style="left:378px;top:88px;width:1px;height:929px;background:#323232;"></div>
<div style="left:379px;top:88px;width:1800px;height:928px;background:#2b2b2b;"></div>
<div style="left:379px;top:88px;width:89px;height:928px;background:#313335;"></div>
<div style="left:469px;top:851px;width:1710px;height:33px;background:#323232;"></div>
<div style="left:454.5px;top:851px;width:12.5px;height:165px;background:#384a57;"></div>
<div style="left:1917px;top:88px;width:2px;height:928px;background:#4b4b4b;"></div>
<div style="left:498.5px;top:88px;width:1.5px;height:928px;background:#3d3d3d;"></div>
<div style="left:522.5px;top:88px;width:1.5px;height:268px;background:#3d3d3d;"></div>
<div style="left:522.5px;top:455px;width:1.5px;height:363px;background:#3d3d3d;"></div>
<div style="left:522.5px;top:983px;width:1.5px;height:33px;background:#3d3d3d;"></div>
<div style="left:546.5px;top:88px;width:1.5px;height:136px;background:#3d3d3d;"></div>
<div style="left:546.5px;top:290px;width:1.5px;height:33px;background:#3d3d3d;"></div>
<div style="left:570.5px;top:488px;width:1.5px;height:297px;background:#3d3d3d;"></div>
<div style="left:594.5px;top:88px;width:1.5px;height:4px;background:#3d3d3d;"></div>
<div style="left:594.5px;top:158px;width:1.5px;height:33px;background:#3d3d3d;"></div>
<div style="left:594.5px;top:554px;width:1.5px;height:33px;background:#3d3d3d;"></div>
<div style="left:594.5px;top:653px;width:1.5px;height:99px;background:#3d3d3d;"></div>
<div style="left:704.7px;top:88px;width:24px;height:4px;background:#52503a;"></div>
<div style="left:704.7px;top:158px;width:24px;height:33px;background:#52503a;"></div>
<div style="left:467px;top:88px;width:2px;height:928px;background:#585a5c;"></div>
<svg style="left:459px;top:98px;" width="20" height="22" viewBox="0 0 20 22"><path d="M10 2.2 L17 8 L17 19.5 L3 19.5 L3 8 Z" fill="#2e3032" stroke="#585a5c" stroke-width="1.6"/><path d="M6.3 12 H13.7" stroke="#585a5c" stroke-width="1.6"/></svg>
<svg style="left:459px;top:197px;" width="20" height="22" viewBox="0 0 20 22"><path d="M10 2.2 L17 8 L17 19.5 L3 19.5 L3 8 Z" fill="#2e3032" stroke="#585a5c" stroke-width="1.6"/><path d="M6.3 12 H13.7" stroke="#585a5c" stroke-width="1.6"/></svg>
<svg style="left:459px;top:230px;" width="20" height="22" viewBox="0 0 20 22"><path d="M10 2.2 L17 8 L17 19.5 L3 19.5 L3 8 Z" fill="#2e3032" stroke="#585a5c" stroke-width="1.6"/><path d="M6.3 12 H13.7" stroke="#585a5c" stroke-width="1.6"/></svg>
<svg style="left:459px;top:329px;" width="20" height="22" viewBox="0 0 20 22"><path d="M10 2.2 L17 8 L17 19.5 L3 19.5 L3 8 Z" fill="#2e3032" stroke="#585a5c" stroke-width="1.6"/><path d="M6.3 12 H13.7" stroke="#585a5c" stroke-width="1.6"/></svg>
<svg style="left:459px;top:362px;" width="20" height="22" viewBox="0 0 20 22"><path d="M10 2.2 L17 8 L17 19.5 L3 19.5 L3 8 Z" fill="#2e3032" stroke="#585a5c" stroke-width="1.6"/><path d="M6.3 12 H13.7" stroke="#585a5c" stroke-width="1.6"/></svg>
<svg style="left:459px;top:593px;" width="20" height="22" viewBox="0 0 20 22"><path d="M10 2.2 L17 8 L17 19.5 L3 19.5 L3 8 Z" fill="#2e3032" stroke="#585a5c" stroke-width="1.6"/><path d="M6.3 12 H13.7" stroke="#585a5c" stroke-width="1.6"/></svg>
<svg style="left:459px;top:758px;" width="20" height="22" viewBox="0 0 20 22"><path d="M10 2.2 L17 8 L17 19.5 L3 19.5 L3 8 Z" fill="#2e3032" stroke="#585a5c" stroke-width="1.6"/><path d="M6.3 12 H13.7" stroke="#585a5c" stroke-width="1.6"/></svg>
<svg style="left:459px;top:791px;" width="20" height="22" viewBox="0 0 20 22"><path d="M10 2.2 L17 8 L17 19.5 L3 19.5 L3 8 Z" fill="#2e3032" stroke="#585a5c" stroke-width="1.6"/><path d="M6.3 12 H13.7" stroke="#585a5c" stroke-width="1.6"/></svg>
<svg style="left:459px;top:824px;" width="20" height="22" viewBox="0 0 20 22"><path d="M10 2.2 L17 8 L17 19.5 L3 19.5 L3 8 Z" fill="#2e3032" stroke="#585a5c" stroke-width="1.6"/><path d="M6.3 12 H13.7" stroke="#585a5c" stroke-width="1.6"/></svg>
<svg style="left:459px;top:135px;" width="20" height="22" viewBox="0 0 20 22"><path d="M3 2.5 L17 2.5 L17 13.5 L10 19.3 L3 13.5 Z" fill="#2e3032" stroke="#585a5c" stroke-width="1.6"/><path d="M6.3 7.5 H13.7" stroke="#585a5c" stroke-width="1.6"/></svg>
<svg style="left:459px;top:267px;" width="20" height="22" viewBox="0 0 20 22"><path d="M3 2.5 L17 2.5 L17 13.5 L10 19.3 L3 13.5 Z" fill="#2e3032" stroke="#585a5c" stroke-width="1.6"/><path d="M6.3 7.5 H13.7" stroke="#585a5c" stroke-width="1.6"/></svg>
<svg style="left:459px;top:432px;" width="20" height="22" viewBox="0 0 20 22"><path d="M3 2.5 L17 2.5 L17 13.5 L10 19.3 L3 13.5 Z" fill="#2e3032" stroke="#585a5c" stroke-width="1.6"/><path d="M6.3 7.5 H13.7" stroke="#585a5c" stroke-width="1.6"/></svg>
<svg style="left:459px;top:465px;" width="20" height="22" viewBox="0 0 20 22"><path d="M3 2.5 L17 2.5 L17 13.5 L10 19.3 L3 13.5 Z" fill="#2e3032" stroke="#585a5c" stroke-width="1.6"/><path d="M6.3 7.5 H13.7" stroke="#585a5c" stroke-width="1.6"/></svg>
<svg style="left:459px;top:531px;" width="20" height="22" viewBox="0 0 20 22"><path d="M3 2.5 L17 2.5 L17 13.5 L10 19.3 L3 13.5 Z" fill="#2e3032" stroke="#585a5c" stroke-width="1.6"/><path d="M6.3 7.5 H13.7" stroke="#585a5c" stroke-width="1.6"/></svg>
<svg style="left:459px;top:630px;" width="20" height="22" viewBox="0 0 20 22"><path d="M3 2.5 L17 2.5 L17 13.5 L10 19.3 L3 13.5 Z" fill="#2e3032" stroke="#585a5c" stroke-width="1.6"/><path d="M6.3 7.5 H13.7" stroke="#585a5c" stroke-width="1.6"/></svg>
<svg style="left:459px;top:960px;" width="20" height="22" viewBox="0 0 20 22"><path d="M3 2.5 L17 2.5 L17 13.5 L10 19.3 L3 13.5 Z" fill="#2e3032" stroke="#585a5c" stroke-width="1.6"/><path d="M6.3 7.5 H13.7" stroke="#585a5c" stroke-width="1.6"/></svg>
<svg style="left:459px;top:993px;" width="20" height="22" viewBox="0 0 20 22"><path d="M3 2.5 L17 2.5 L17 13.5 L10 19.3 L3 13.5 Z" fill="#2e3032" stroke="#585a5c" stroke-width="1.6"/><path d="M6.3 7.5 H13.7" stroke="#585a5c" stroke-width="1.6"/></svg>
<svg style="left:454px;top:382px;" width="14" height="14" viewBox="0 0 14 14"><path d="M0.5 1 L13 7 L0.5 13 Z" fill="#6c727a"/></svg>
<pre style="left:377.5px;width:30.4px;text-align:right;top:95.8px;font-size:19px;letter-spacing:-0.9px;color:#606366;">29</pre>
<pre style="left:377.5px;width:30.4px;text-align:right;top:128.8px;font-size:19px;letter-spacing:-0.9px;color:#606366;">30</pre>
<pre style="left:377.5px;width:30.4px;text-align:right;top:161.8px;font-size:19px;letter-spacing:-0.9px;color:#606366;">31</pre>
<pre style="left:377.5px;width:30.4px;text-align:right;top:194.8px;font-size:19px;letter-spacing:-0.9px;color:#606366;">32</pre>
<pre style="left:377.5px;width:30.4px;text-align:right;top:227.8px;font-size:19px;letter-spacing:-0.9px;color:#606366;">33</pre>
<pre style="left:377.5px;width:30.4px;text-align:right;top:260.8px;font-size:19px;letter-spacing:-0.9px;color:#606366;">34</pre>
<pre style="left:377.5px;width:30.4px;text-align:right;top:293.8px;font-size:19px;letter-spacing:-0.9px;color:#606366;">35</pre>
<pre style="left:377.5px;width:30.4px;text-align:right;top:326.8px;font-size:19px;letter-spacing:-0.9px;color:#606366;">36</pre>
<pre style="left:377.5px;width:30.4px;text-align:right;top:359.8px;font-size:19px;letter-spacing:-0.9px;color:#606366;">37</pre>
<pre style="left:377.5px;width:30.4px;text-align:right;top:392.8px;font-size:19px;letter-spacing:-0.9px;color:#606366;">38</pre>
<pre style="left:377.5px;width:30.4px;text-align:right;top:425.8px;font-size:19px;letter-spacing:-0.9px;color:#606366;">39</pre>
<pre style="left:377.5px;width:30.4px;text-align:right;top:458.8px;font-size:19px;letter-spacing:-0.9px;color:#606366;">40</pre>
<pre style="left:377.5px;width:30.4px;text-align:right;top:491.8px;font-size:19px;letter-spacing:-0.9px;color:#606366;">41</pre>
<pre style="left:377.5px;width:30.4px;text-align:right;top:524.8px;font-size:19px;letter-spacing:-0.9px;color:#606366;">42</pre>
<pre style="left:377.5px;width:30.4px;text-align:right;top:557.8px;font-size:19px;letter-spacing:-0.9px;color:#606366;">43</pre>
<pre style="left:377.5px;width:30.4px;text-align:right;top:590.8px;font-size:19px;letter-spacing:-0.9px;color:#606366;">44</pre>
<pre style="left:377.5px;width:30.4px;text-align:right;top:623.8px;font-size:19px;letter-spacing:-0.9px;color:#606366;">45</pre>
<pre style="left:377.5px;width:30.4px;text-align:right;top:656.8px;font-size:19px;letter-spacing:-0.9px;color:#606366;">46</pre>
<pre style="left:377.5px;width:30.4px;text-align:right;top:689.8px;font-size:19px;letter-spacing:-0.9px;color:#606366;">47</pre>
<pre style="left:377.5px;width:30.4px;text-align:right;top:722.8px;font-size:19px;letter-spacing:-0.9px;color:#606366;">48</pre>
<pre style="left:377.5px;width:30.4px;text-align:right;top:755.8px;font-size:19px;letter-spacing:-0.9px;color:#606366;">49</pre>
<pre style="left:377.5px;width:30.4px;text-align:right;top:788.8px;font-size:19px;letter-spacing:-0.9px;color:#606366;">50</pre>
<pre style="left:377.5px;width:30.4px;text-align:right;top:821.8px;font-size:19px;letter-spacing:-0.9px;color:#606366;">51</pre>
<pre style="left:377.5px;width:30.4px;text-align:right;top:854.8px;font-size:19px;letter-spacing:-0.9px;color:#a4a3a3;">52</pre>
<pre style="left:377.5px;width:30.4px;text-align:right;top:887.8px;font-size:19px;letter-spacing:-0.9px;color:#606366;">53</pre>
<pre style="left:377.5px;width:30.4px;text-align:right;top:920.8px;font-size:19px;letter-spacing:-0.9px;color:#606366;">54</pre>
<pre style="left:377.5px;width:30.4px;text-align:right;top:953.8px;font-size:19px;letter-spacing:-0.9px;color:#606366;">55</pre>
<pre style="left:377.5px;width:30.4px;text-align:right;top:986.8px;font-size:19px;letter-spacing:-0.9px;color:#606366;">56</pre>
<pre style="left:597.5px;top:95px;">}</pre>
<pre style="left:597.5px;top:128px;"><b>else</b>{</pre>
<pre style="left:621.5px;top:161px;"><u>result</u> += <s>"-"</s><b>;</b></pre>
<pre style="left:597.5px;top:194px;">}</pre>
<pre style="left:549.5px;top:227px;">}</pre>
<pre style="left:549.5px;top:260px;"><b>if</b>(word.equals(<u>result</u>)){<span style="color:#808080">;</span></pre>
<pre style="left:573.5px;top:293px;">array.add(word)<b>;</b></pre>
<pre style="left:549.5px;top:326px;">}</pre>
<pre style="left:525.5px;top:359px;">}</pre>
<pre style="left:525.5px;top:392px;">TreeMap&lt;Character<b>,</b> Integer&gt; map = <b>new</b> TreeMap&lt;&gt;()<b>;</b></pre>
<pre style="left:525.5px;top:425px;"><b>for</b> (String str : array) {</pre>
<pre style="left:573.5px;top:458px;"><b>for</b> (<b>int</b> <u>i</u> = <em>0</em><b>;</b> <u>i</u> &lt; str.length()<b>;</b> <u>i</u>++) {</pre>
<pre style="left:597.5px;top:491px;"><b>char</b> c = str.charAt(<u>i</u>)<b>;</b></pre>
<pre style="left:597.5px;top:524px;"><b>if</b> (!map.containsKey(c)) {</pre>
<pre style="left:621.5px;top:557px;">map.put(c<b>,</b> <em>1</em>)<b>;</b></pre>
<pre style="left:597.5px;top:590px;">}</pre>
<pre style="left:597.5px;top:623px;"><b>else</b>{</pre>
<pre style="left:621.5px;top:656px;"><b>int</b> <u>count</u> = map.get(c)<b>;</b></pre>
<pre style="left:621.5px;top:689px;"><u>count</u>++<b>;</b></pre>
<pre style="left:621.5px;top:722px;">map.put(c<b>,</b> <u>count</u>)<b>;</b></pre>
<pre style="left:597.5px;top:755px;">}</pre>
<pre style="left:573.5px;top:788px;">}</pre>
<pre style="left:525.5px;top:821px;">}</pre>
<pre style="left:525.5px;top:854px;">System.<i>out</i>.println(map)<b>;</b></pre>
<pre style="left:525.5px;top:887px;"><b>char</b> <u>key</u> = Character.<i>MIN_VALUE</i><b>;</b></pre>
<pre style="left:525.5px;top:920px;"><b>int</b> <u>times</u> = <em>0</em><b>;</b></pre>
<pre style="left:525.5px;top:953px;"><b>for</b>(Map.Entry&lt;Character<b>,</b> Integer&gt;entry: map.entrySet()){</pre>
<pre style="left:549.5px;top:986px;"><b>if</b>(entry.getValue() &gt; <u>times</u>){</pre>
<svg style="left:2116px;top:99px;" width="18" height="19" viewBox="0 0 18 19"><path d="M9 1 L17.5 17.5 L0.5 17.5 Z" fill="#cba31e"/><rect x="7.9" y="6.5" width="2.3" height="6" fill="#2b2b2b"/><rect x="7.9" y="13.8" width="2.3" height="2.3" fill="#2b2b2b"/></svg>
<span class="u" style="left:2139px;top:98.94px;font-size:17.5px;line-height:24px;color:#a9b7c6;transform:scaleX(0.9247);">6</span>
<svg style="left:2164px;top:102px;" width="16" height="12" viewBox="0 0 16 12"><path d="M1.5 10 L8.5 3 L15.5 10" fill="none" stroke="#afb1b3" stroke-width="1.6"/></svg>
<div style="left:0px;top:1016px;width:2179px;height:1px;background:#393c3e;"></div>
<div style="left:0px;top:1017px;width:2179px;height:2px;background:#2d2e2f;"></div>
<div style="left:0px;top:1019px;width:2179px;height:39px;background:#3b4754;"></div>
<span class="u" style="left:6px;top:1026.94px;font-size:17.5px;line-height:24px;color:#bbbbbb;transform:scaleX(0.9198);">Run:</span>
<svg style="left:71.7px;top:1029px;" width="19" height="18" viewBox="0 0 19 18"><g opacity="0.75"><path d="M8 1.6 L8 16.4 L0.3 9 Z" fill="#f0692a"/><path d="M10.2 1.6 L10.2 16.4 L17.9 9 Z" fill="#5fb643"/></g></svg>
<span class="u" style="left:99px;top:1026.94px;font-size:17.5px;line-height:24px;color:#bbbbbb;transform:scaleX(0.9463);">B Tests</span>
<svg style="left:163px;top:1031px;" width="16" height="16" viewBox="0 0 16 16"><path d="M3 3 L13 13 M13 3 L3 13" stroke="#6e7580" stroke-width="1.5" fill="none"/></svg>
<svg style="left:214.7px;top:1029px;" width="19" height="18" viewBox="0 0 19 18"><g opacity="0.75"><path d="M8 1.6 L8 16.4 L0.3 9 Z" fill="#f0692a"/><path d="M10.2 1.6 L10.2 16.4 L17.9 9 Z" fill="#5fb643"/></g></svg>
<span class="u" style="left:242px;top:1026.94px;font-size:17.5px;line-height:24px;color:#bbbbbb;transform:scaleX(0.9982);">A Tests</span>
<svg style="left:307px;top:1031px;" width="16" height="16" viewBox="0 0 16 16"><path d="M3 3 L13 13 M13 3 L3 13" stroke="#6e7580" stroke-width="1.5" fill="none"/></svg>
<div style="left:194px;top:1054px;width:144px;height:4px;background:#4a88c7;"></div>
<svg style="left:2150px;top:1026px;" width="24" height="24" viewBox="0 0 24 24"><path d="M10.22 4.82 L10.32 2.14 L13.68 2.14 L13.78 4.82 L15.82 5.66 L17.78 3.84 L20.16 6.22 L18.34 8.18 L19.18 10.22 L21.86 10.32 L21.86 13.68 L19.18 13.78 L18.34 15.82 L20.16 17.78 L17.78 20.16 L15.82 18.34 L13.78 19.18 L13.68 21.86 L10.32 21.86 L10.22 19.18 L8.18 18.34 L6.22 20.16 L3.84 17.78 L5.66 15.82 L4.82 13.78 L2.14 13.68 L2.14 10.32 L4.82 10.22 L5.66 8.18 L3.84 6.22 L6.22 3.84 L8.18 5.66Z M8.40 12.00 a3.5999999999999996 3.5999999999999996 0 1 0 7.199999999999999 0 a3.5999999999999996 3.5999999999999996 0 1 0 -7.199999999999999 0Z" fill="#afb1b3" fill-rule="evenodd" opacity="1"/></svg>
<div style="left:0px;top:1058px;width:2179px;height:43px;background:#3c3f41;"></div>
<div style="left:0px;top:1100px;width:2179px;height:2px;background:#323232;"></div>
<div style="left:39px;top:1058px;width:1px;height:285px;background:#323232;"></div>
<svg style="left:12px;top:1070.5px;" width="16" height="19" viewBox="0 0 16 19"><path d="M0.3 0.8 L14.8 9.7 L0.3 18.5 Z" fill="#499c54"/></svg>
<div style="left:46px;top:1063px;width:34px;height:34px;background:#5c6164;border-radius:5px;"></div>
<svg style="left:51px;top:1068px;" width="24" height="24" viewBox="0 0 24 24"><path d="M3 12.5 L9 18.5 L21 5.5" transform="translate(12 12) scale(0.93) translate(-12 -12)" fill="none" stroke="#afb1b3" stroke-width="4"/></svg>
<div style="left:85px;top:1063px;width:34px;height:34px;background:#5c6164;border-radius:5px;"></div>
<svg style="left:91px;top:1069px;" width="22" height="22" viewBox="0 0 22 22"><circle cx="11" cy="11" r="8.3" fill="none" stroke="#afb1b3" stroke-width="2.6"/><path d="M5.5 16.5 L16.5 5.5" stroke="#afb1b3" stroke-width="2.6"/></svg>
<div style="left:126px;top:1064px;width:2px;height:31px;background:#555759;"></div>
<svg style="left:170px;top:1073px;" width="16" height="12" viewBox="0 0 16 12"><path d="M2.5 2.3 L6.2 6 L2.5 9.7 M8.3 2.3 L12 6 L8.3 9.7" fill="none" stroke="#afb1b3" stroke-width="1.5"/></svg>
<svg style="left:195.5px;top:1066.5px;" width="23.0" height="23.0" viewBox="0 0 23.0 23.0"><g opacity="1"><circle cx="11.5" cy="11.5" r="10.5" fill="#f2a73b"/><path d="M7.0 7.0 L16.0 16.0 M16.0 7.0 L7.0 16.0" stroke="#2b2b2b" stroke-width="2.6" fill="none"/></g></svg>
<span class="u" style="left:224px;top:1067.44px;font-size:17.5px;line-height:24px;color:#e05555;transform:scaleX(0.9923);">Tests failed: 1,</span>
<span class="u" style="left:340px;top:1067.44px;font-size:17.5px;line-height:24px;color:#c9c9c9;transform:scaleX(0.9751);">passed: 6</span>
<span class="u" style="left:420px;top:1067.44px;font-size:17.5px;line-height:24px;color:#7d8082;transform:scaleX(1.0213);">of 7 tests – 540 ms</span>
<div style="left:0px;top:1102px;width:39px;height:241px;background:#3c3f41;"></div>
<svg style="left:4px;top:1104px;" width="30" height="28" viewBox="0 0 30 28"><path d="M2.8 11.3 L2.8 24.9 L14.2 18.1 Z" fill="#499c54"/><circle cx="18" cy="13.1" r="8.3" fill="#db5452"/><text x="18.2" y="18.8" text-anchor="middle" font-family="Liberation Sans" font-weight="bold" font-size="16" fill="#3c3f41">9</text></svg>
<svg style="left:6px;top:1144px;" width="26" height="28" viewBox="0 0 26 28"><g transform="translate(12 14) scale(0.8 0.98) translate(-13 -14)"><g fill="none" stroke="#afb1b3" stroke-width="2.6"><path d="M21 9 A9 9 0 0 0 6 6.5"/><path d="M5 19 A9 9 0 0 0 20 21.5"/><rect x="2.5" y="10.8" width="6" height="6"/><rect x="17.5" y="10.8" width="6" height="6"/></g><path d="M2.5 2 L2.5 9 L9.5 8 Z" fill="#afb1b3"/><path d="M23.5 26 L23.5 19 L16.5 20 Z" fill="#afb1b3"/></g></svg>
<svg style="left:6px;top:1185px;" width="24" height="24" viewBox="0 0 24 24"><path d="M3.5 21 L13 11.5" stroke="#afb1b3" stroke-width="4.2" fill="none"/><path d="M21.5 5.5 L17.5 9.5 L14.5 6.5 L18.5 2.5 A6.2 6.2 0 1 0 21.5 5.5 Z" fill="#afb1b3"/></svg>
<div style="left:3px;top:1221px;width:30px;height:2px;background:#55585a;"></div>
<div style="left:10.5px;top:1238.6px;width:15px;height:14.6px;background:#5b5d5f;"></div>
<svg style="left:6px;top:1274px;" width="24" height="22" viewBox="0 0 24 22"><path d="M1 5 H6.5 L8.5 1.5 H15.5 L17.5 5 H23 V20.5 H1 Z" fill="#5b5d5f"/><circle cx="12" cy="12.5" r="4.2" fill="none" stroke="#3c3f41" stroke-width="2.2"/></svg>
<svg style="left:11.5px;top:1322.5px;" width="16" height="12" viewBox="0 0 16 12"><path d="M2.5 2.3 L6.2 6 L2.5 9.7 M8.3 2.3 L12 6 L8.3 9.7" fill="none" stroke="#afb1b3" stroke-width="1.5"/></svg>
<div style="left:40px;top:1102px;width:150px;height:241px;background:#3c3f41;"></div>
<div style="left:40px;top:1102px;width:150px;height:30px;background:#4b6eaf;"></div>
<svg style="left:46px;top:1107px;" width="20" height="20" viewBox="0 0 20 20"><path d="M4 7.5 L10 13.5 L16 7.5" fill="none" stroke="#c4cde0" stroke-width="1.8"/></svg>
<svg style="left:76px;top:1106px;" width="22" height="22" viewBox="0 0 22 22"><g opacity="1"><circle cx="11" cy="11" r="10" fill="#d6a048"/><path d="M6.5 6.5 L15.5 15.5 M15.5 6.5 L6.5 15.5" stroke="#4b6eaf" stroke-width="2.6" fill="none"/></g></svg>
<span class="u" style="left:103px;top:1105.80px;font-size:15px;line-height:24px;color:#c4cde0;transform:scaleX(0.7199);">.</span>
<span class="u" style="left:113.5px;top:1105.50px;font-size:15px;line-height:24px;color:#c3cad8;transform:scaleX(1.0165);">540 ms</span>
<svg style="left:73px;top:1137px;" width="20" height="20" viewBox="0 0 20 20"><path d="M4 7.5 L10 13.5 L16 7.5" fill="none" stroke="#afb1b3" stroke-width="1.8"/></svg>
<svg style="left:104px;top:1136px;" width="4.2" height="22" viewBox="0 0 4.2 22"><circle cx="9.1" cy="11.2" r="9" fill="#d6a048"/></svg>
<span class="u" style="left:113.5px;top:1135.50px;font-size:15px;line-height:24px;color:#7f8285;transform:scaleX(1.0165);">540 ms</span>
<svg style="left:129.3px;top:1165.4px;" width="24" height="24" viewBox="0 0 24 24"><path d="M3 12.5 L9 18.5 L21 5.5" transform="translate(12 12) scale(0.9) translate(-12 -12)" fill="none" stroke="#4f9c3e" stroke-width="4.6"/></svg>
<div style="left:150px;top:1164.20px;width:19.6px;height:30px;overflow:hidden"><span class="u" style="left:8px;top:2.4px;font-size:17.5px;line-height:24px;color:#bbbbbb;transform:scaleX(0.88)">The</span></div>
<svg style="left:130px;top:1196.27px;" width="22" height="22" viewBox="0 0 22 22"><g opacity="1"><circle cx="11" cy="11" r="10" fill="#d6a048"/><path d="M6.5 6.5 L15.5 15.5 M15.5 6.5 L6.5 15.5" stroke="#33373a" stroke-width="2.6" fill="none"/></g></svg>
<div style="left:150px;top:1194.27px;width:19.6px;height:30px;overflow:hidden"><span class="u" style="left:8px;top:2.4px;font-size:17.5px;line-height:24px;color:#bbbbbb;transform:scaleX(0.88)">Tes</span></div>
<svg style="left:129.3px;top:1225.5400000000002px;" width="24" height="24" viewBox="0 0 24 24"><path d="M3 12.5 L9 18.5 L21 5.5" transform="translate(12 12) scale(0.9) translate(-12 -12)" fill="none" stroke="#4f9c3e" stroke-width="4.6"/></svg>
<div style="left:150px;top:1224.34px;width:19.6px;height:30px;overflow:hidden"><span class="u" style="left:8px;top:2.4px;font-size:17.5px;line-height:24px;color:#bbbbbb;transform:scaleX(0.88)">A</span></div>
<svg style="left:129.3px;top:1255.6100000000001px;" width="24" height="24" viewBox="0 0 24 24"><path d="M3 12.5 L9 18.5 L21 5.5" transform="translate(12 12) scale(0.9) translate(-12 -12)" fill="none" stroke="#4f9c3e" stroke-width="4.6"/></svg>
<div style="left:150px;top:1254.41px;width:19.6px;height:30px;overflow:hidden"><span class="u" style="left:8px;top:2.4px;font-size:17.5px;line-height:24px;color:#bbbbbb;transform:scaleX(0.88)">Tes</span></div>
<svg style="left:129.3px;top:1285.68px;" width="24" height="24" viewBox="0 0 24 24"><path d="M3 12.5 L9 18.5 L21 5.5" transform="translate(12 12) scale(0.9) translate(-12 -12)" fill="none" stroke="#4f9c3e" stroke-width="4.6"/></svg>
<div style="left:150px;top:1284.48px;width:19.6px;height:30px;overflow:hidden"><span class="u" style="left:8px;top:2.4px;font-size:17.5px;line-height:24px;color:#bbbbbb;transform:scaleX(0.88)">The</span></div>
<svg style="left:129.3px;top:1315.75px;" width="24" height="24" viewBox="0 0 24 24"><path d="M3 12.5 L9 18.5 L21 5.5" transform="translate(12 12) scale(0.9) translate(-12 -12)" fill="none" stroke="#4f9c3e" stroke-width="4.6"/></svg>
<div style="left:150px;top:1314.55px;width:19.6px;height:30px;overflow:hidden"><span class="u" style="left:8px;top:2.4px;font-size:17.5px;line-height:24px;color:#bbbbbb;transform:scaleX(0.88)">A</span></div>
<div style="left:177px;top:1104px;width:12px;height:195px;background:#5b5d5f;"></div>
<div style="left:177px;top:1104px;width:12px;height:28px;background:#6d83b3;"></div>
<div style="left:42px;top:1329px;width:39px;height:12px;background:#595b5d;"></div>
<div style="left:190px;top:1102px;width:2px;height:241px;background:#323232;"></div>
<div style="left:192px;top:1102px;width:1987px;height:241px;background:#2b2b2b;"></div>
<div style="left:211px;top:1103px;width:624px;height:32px;background:#393939;"></div>
<pre style="left:211px;top:1104px;color:#949494;">"C:\Program Files\Java\jdk-11.0.13\bin\java.exe" ...</pre>
<pre style="left:211px;top:1137px;color:#bbbbbb;">{b=80, c=41, d=88, e=236, f=54, g=77, h=70, i=155, j=17, k=35, l=67, m=77, n=91, o=222, p=91, r=83, s=101, t=103, u=124, v=22, w=56, x=26, y=69, z=13}</pre>
<pre style="left:211px;top:1170px;color:#bbbbbb;">{b=39, c=17, d=33, f=21, g=39, h=30, i=136, j=7, k=15, l=24, m=39, n=48, p=48, r=33, s=49, t=44, u=102, v=8, w=10, x=9, y=32, z=6}</pre>
<pre style="left:211px;top:1203px;color:#bbbbbb;">{}</pre>
<pre style="left:211px;top:1269px;color:#ff6b68;">org.opentest4j.AssertionFailedError:</pre>
<pre style="left:211px;top:1302px;color:#bbbbbb;">Expected :<span style="color:#ff6b68">e</span></pre>
<div style="left:2165px;top:1104px;width:12px;height:94px;background:#4d4f51;"></div>
<div style="left:0px;top:1342.5px;width:2179px;height:1.5px;background:#2f3133;"></div>
<div style="left:0px;top:1344px;width:2179px;height:16px;background:#3c3f41;"></div>
<div style="left:493px;top:1344px;width:81px;height:16px;background:#2d2f30;"></div>
<svg style="left:11px;top:1351px;" width="18" height="14" viewBox="0 0 18 14"><circle cx="3.5" cy="4" r="2.6" fill="#afb1b3"/><circle cx="12" cy="6.6" r="2.6" fill="#afb1b3"/><path d="M3.5 4 V14 M12 6.6 V14" stroke="#afb1b3" stroke-width="2"/></svg>
<span class="u" style="left:37px;top:1352.14px;font-size:17.5px;line-height:24px;color:#bbbbbb;transform:scaleX(1.0733);">Git</span>
<svg style="left:85px;top:1353.5px;" width="16" height="10" viewBox="0 0 16 10"><g fill="#afb1b3"><rect x="0" y="0.5" width="3" height="3"/><rect x="5" y="0.5" width="11" height="3"/><rect x="0" y="6.5" width="3" height="3"/><rect x="5" y="6.5" width="11" height="3"/></g></svg>
<span class="u" style="left:108px;top:1352.14px;font-size:17.5px;line-height:24px;color:#bbbbbb;transform:scaleX(0.8560);">TODO</span>
<svg style="left:183px;top:1351px;" width="18" height="12" viewBox="0 0 18 12"><circle cx="8.5" cy="9" r="8" fill="#afb1b3"/><rect x="7.3" y="4" width="2.4" height="8" fill="#3c3f41"/></svg>
<span class="u" style="left:207px;top:1352.14px;font-size:17.5px;line-height:24px;color:#bbbbbb;transform:scaleX(0.9200);">Problems</span>
<svg style="left:301px;top:1351.5px;" width="20" height="12" viewBox="0 0 20 12"><path d="M2 7 L9 0.5 L14 2 L10 6 L8.5 5.5 L5 9 Z M9 7 L11 5 L17 12 L13 12 Z" fill="#afb1b3"/></svg>
<span class="u" style="left:329px;top:1352.14px;font-size:17.5px;line-height:24px;color:#bbbbbb;transform:scaleX(0.9765);">Build</span>
<svg style="left:392px;top:1352px;" width="18" height="10" viewBox="0 0 18 10"><rect x="0" y="0" width="18" height="12" fill="#afb1b3"/><path d="M3 2.5 L8 7 L3 11" stroke="#3c3f41" stroke-width="2" fill="none"/></svg>
<span class="u" style="left:417px;top:1352.14px;font-size:17.5px;line-height:24px;color:#bbbbbb;transform:scaleX(0.9073);">Terminal</span>
<svg style="left:509px;top:1353.5px;" width="14" height="10" viewBox="0 0 14 10"><path d="M0.5 0.5 L14 9 L0.5 17 Z" fill="#afb1b3"/></svg>
<span class="u" style="left:533px;top:1352.14px;font-size:17.5px;line-height:24px;color:#bbbbbb;transform:scaleX(0.8410);">Run</span>
<svg style="left:590px;top:1351.5px;" width="18" height="12" viewBox="0 0 18 12"><g fill="#afb1b3"><ellipse cx="9" cy="11" rx="5.5" ry="7"/><path d="M4.5 1.5 L6.5 4.5 M13.5 1.5 L11.5 4.5" stroke="#afb1b3" stroke-width="1.6"/><rect x="0.5" y="6.5" width="17" height="2"/></g></svg>
<span class="u" style="left:615px;top:1352.14px;font-size:17.5px;line-height:24px;color:#bbbbbb;transform:scaleX(0.8726);">Debug</span>
<svg style="left:2080px;top:1350.5px;" width="20" height="10" viewBox="0 0 20 10"><circle cx="10" cy="10" r="9.5" fill="#499c54"/><text x="10" y="14" text-anchor="middle" font-family="Liberation Sans" font-size="11" font-weight="bold" fill="#ffffff">2</text></svg>
<span class="u" style="left:2107px;top:1352.14px;font-size:17.5px;line-height:24px;color:#bbbbbb;transform:scaleX(0.8882);">Event Log</span>
</div>
</body></html>
